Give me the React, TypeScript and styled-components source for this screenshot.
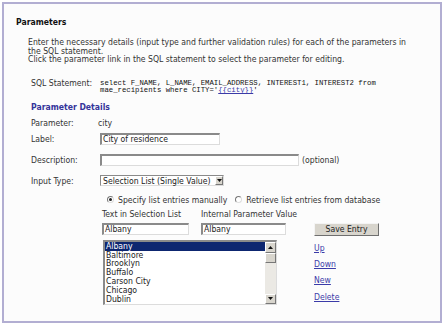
import React from 'react';
import styled, { createGlobalStyle } from 'styled-components';

const GlobalStyle = createGlobalStyle`
  html, body {
    margin: 0;
    padding: 0;
    background: #ffffff;
  }
  body {
    font-family: "DejaVu Sans Condensed", "DejaVu Sans", sans-serif;
    font-size: 8.6px;
    color: #333;
  }
`;

const Frame = styled.div`
  box-sizing: border-box;
  margin: 2px 0 0 2px;
  width: 440px;
  height: 321px;
  border: 2px solid #b2aed2;
  background: #fcfcfc;
  padding: 13px 12px 0 12px;
`;

const Title = styled.div`
  font-weight: bold;
  color: #111;
  line-height: 10px;
`;

const Intro = styled.p`
  margin: 11px 0 0 12px;
  line-height: 8.6px;
  white-space: nowrap;
`;

const Section = styled.div`
  margin-left: 15px;
`;

const SqlRow = styled.div`
  display: flex;
  margin-top: 16px;
`;

const SqlLabel = styled.div`
  width: 69px;
  flex: none;
  line-height: 7.5px;
`;

const SqlText = styled.div`
  font-family: "Liberation Mono", "DejaVu Sans Mono", monospace;
  font-size: 7.3px;
  line-height: 7.5px;
  color: #111;
  white-space: nowrap;
`;

const ParamLink = styled.a`
  color: #3b3ba8;
  text-decoration: underline;
`;

const SubHeading = styled.div`
  margin-top: 7px;
  font-weight: bold;
  color: #34349a;
  line-height: 10px;
`;

const FormRow = styled.div<{ $top: number }>`
  display: flex;
  align-items: center;
  height: 12px;
  margin-top: ${p => p.$top}px;
`;

const FieldLabel = styled.div`
  width: 69px;
  flex: none;
`;

const ValueText = styled.span`
  margin-left: -2px;
`;

const TextBox = styled.div<{ $w: number }>`
  box-sizing: border-box;
  width: ${p => p.$w}px;
  height: 12px;
  background: #fff;
  border-style: solid;
  border-width: 2px 1px 1px 2px;
  border-color: #8a8a8a #dcdcdc #dcdcdc #8a8a8a;
  padding-left: 1px;
  line-height: 9px;
  color: #222;
  white-space: nowrap;
  overflow: hidden;
`;

const Hint = styled.span`
  margin-left: 3px;
`;

const SelectBox = styled.div`
  box-sizing: border-box;
  width: 124px;
  height: 11px;
  background: #fff;
  border-style: solid;
  border-width: 1px;
  border-color: #8a8a8a #dcdcdc #dcdcdc #8a8a8a;
  display: flex;
  align-items: center;
  justify-content: space-between;
  padding-left: 2px;
  color: #222;
  white-space: nowrap;
`;

const DropButton = styled.span`
  box-sizing: border-box;
  width: 8px;
  height: 9px;
  background: #d8d5cd;
  border: 1px solid;
  border-color: #fff #777 #777 #fff;
  display: flex;
  align-items: center;
  justify-content: center;
`;

const RadioRow = styled.div`
  display: flex;
  align-items: center;
  height: 10px;
  margin: 8px 0 0 76px;
  white-space: nowrap;
`;

const RadioOption = styled.label`
  display: flex;
  align-items: center;
  gap: 4px;
  margin-right: 8px;
`;

const RadioDot = styled.span<{ $on?: boolean }>`
  box-sizing: border-box;
  width: 7px;
  height: 7px;
  border-radius: 50%;
  background: #fff;
  border: 1px solid;
  border-color: #777 #ddd #ddd #777;
  display: flex;
  align-items: center;
  justify-content: center;
  &::after {
    content: '';
    width: 3px;
    height: 3px;
    border-radius: 50%;
    background: ${p => (p.$on ? '#222' : 'transparent')};
  }
`;

const EntryArea = styled.div`
  display: flex;
  margin: 5px 0 0 71px;
`;

const LeftCol = styled.div`
  width: 184px;
`;

const HeadRow = styled.div`
  display: grid;
  grid-template-columns: 99px 85px;
  line-height: 9px;
  white-space: nowrap;
`;

const InputRow = styled.div`
  display: grid;
  grid-template-columns: 99px 85px;
  margin-top: 4px;
`;

const ListBox = styled.div`
  box-sizing: border-box;
  margin: 5px 0 0 1px;
  width: 174px;
  height: 65px;
  background: #fff;
  border-style: solid;
  border-width: 2px 1px 1px 2px;
  border-color: #8a8a8a #dcdcdc #dcdcdc #8a8a8a;
  display: flex;
`;

const Items = styled.div`
  flex: 1;
  overflow: hidden;
`;

const Item = styled.div<{ $sel?: boolean }>`
  height: 8.8px;
  line-height: 8.8px;
  padding-left: 1px;
  color: ${p => (p.$sel ? '#fff' : '#222')};
  background: ${p => (p.$sel ? '#0d2670' : 'transparent')};
`;

const ScrollBar = styled.div`
  width: 11px;
  flex: none;
  display: flex;
  flex-direction: column;
  background: #ebe9e4;
`;

const ScrollBtn = styled.div<{ $h: number }>`
  box-sizing: border-box;
  height: ${p => p.$h}px;
  background: #d8d5cd;
  border: 1px solid;
  border-color: #fff #777 #777 #fff;
  display: flex;
  align-items: center;
  justify-content: center;
`;

const Spacer = styled.div`
  flex: 1;
`;

const RightCol = styled.div`
  margin: 13px 0 0 28px;
  display: flex;
  flex-direction: column;
  align-items: flex-start;
`;

const SaveButton = styled.button`
  box-sizing: border-box;
  width: 65px;
  height: 13px;
  padding: 0;
  font-family: inherit;
  font-size: 8.6px;
  color: #222;
  background: #d8d5cd;
  border: 1px solid;
  border-color: #f4f4f4 #6f6f6f #6f6f6f #f4f4f4;
`;

const ActionLink = styled.a<{ $top: number }>`
  margin-top: ${p => p.$top}px;
  line-height: 9px;
  color: #3b3ba8;
  text-decoration: underline;
`;

const Arrow = ({ up }: { up?: boolean }) => (
  <svg width="5" height="3" viewBox="0 0 5 3">
    <polygon points={up ? '2.5,0 5,3 0,3' : '0,0 5,0 2.5,3'} fill="#111" />
  </svg>
);

const cities = ['Albany', 'Baltimore', 'Brooklyn', 'Buffalo', 'Carson City', 'Chicago', 'Dublin'];

export default function App() {
  return (
    <>
      <GlobalStyle />
      <Frame>
        <Title>Parameters</Title>
        <Intro>
          Enter the necessary details (input type and further validation rules) for each of the parameters in
          <br />
          the SQL statement.
          <br />
          Click the parameter link in the SQL statement to select the parameter for editing.
        </Intro>
        <Section>
          <SqlRow>
            <SqlLabel>SQL Statement:</SqlLabel>
            <SqlText>
              select F_NAME, L_NAME, EMAIL_ADDRESS, INTEREST1, INTEREST2 from
              <br />
              mae_recipients where CITY='<ParamLink href="#">{'{{city}}'}</ParamLink>'
            </SqlText>
          </SqlRow>
          <SubHeading>Parameter Details</SubHeading>
          <FormRow $top={5}>
            <FieldLabel>Parameter:</FieldLabel>
            <ValueText>city</ValueText>
          </FormRow>
          <FormRow $top={4}>
            <FieldLabel>Label:</FieldLabel>
            <TextBox $w={120}>City of residence</TextBox>
          </FormRow>
          <FormRow $top={9}>
            <FieldLabel>Description:</FieldLabel>
            <TextBox $w={199} />
            <Hint>(optional)</Hint>
          </FormRow>
          <FormRow $top={9}>
            <FieldLabel>Input Type:</FieldLabel>
            <SelectBox>
              Selection List (Single Value)
              <DropButton>
                <Arrow />
              </DropButton>
            </SelectBox>
          </FormRow>
          <RadioRow>
            <RadioOption>
              <RadioDot $on />
              Specify list entries manually
            </RadioOption>
            <RadioOption>
              <RadioDot />
              Retrieve list entries from database
            </RadioOption>
          </RadioRow>
          <EntryArea>
            <LeftCol>
              <HeadRow>
                <span>Text in Selection List</span>
                <span>Internal Parameter Value</span>
              </HeadRow>
              <InputRow>
                <TextBox $w={87}>Albany</TextBox>
                <TextBox $w={85}>Albany</TextBox>
              </InputRow>
              <ListBox>
                <Items>
                  {cities.map((c, i) => (
                    <Item key={c} $sel={i === 0}>
                      {c}
                    </Item>
                  ))}
                </Items>
                <ScrollBar>
                  <ScrollBtn $h={11}>
                    <Arrow up />
                  </ScrollBtn>
                  <ScrollBtn $h={10} />
                  <Spacer />
                  <ScrollBtn $h={10}>
                    <Arrow />
                  </ScrollBtn>
                </ScrollBar>
              </ListBox>
            </LeftCol>
            <RightCol>
              <SaveButton>Save Entry</SaveButton>
              <ActionLink href="#" $top={8}>Up</ActionLink>
              <ActionLink href="#" $top={7}>Down</ActionLink>
              <ActionLink href="#" $top={7}>New</ActionLink>
              <ActionLink href="#" $top={8}>Delete</ActionLink>
            </RightCol>
          </EntryArea>
        </Section>
      </Frame>
    </>
  );
}
